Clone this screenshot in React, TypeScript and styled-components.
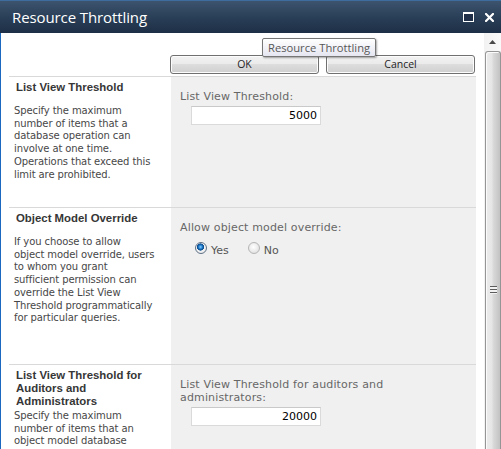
import styled, { createGlobalStyle } from "styled-components";

const GlobalStyle = createGlobalStyle`
  html, body {
    margin: 0;
    padding: 0;
    background: #ffffff;
  }
  body {
    font-family: "DejaVu Sans", Verdana, sans-serif;
  }
`;

const Frame = styled.div`
  position: relative;
  width: 501px;
  height: 449px;
  overflow: hidden;
  display: flex;
  flex-direction: column;
  background: #ffffff;
`;

const TitleBar = styled.div`
  flex: none;
  height: 33px;
  box-sizing: border-box;
  display: flex;
  align-items: center;
  padding: 0 7px 0 12px;
  border-top: 1px solid #3f6c9e;
  background: linear-gradient(#3d546e, #2a3f58 50%, #1d2f46);
`;

const TitleText = styled.div`
  font-family: "Open Sans", "Liberation Sans", sans-serif;
  font-size: 15px;
  color: #ffffff;
  letter-spacing: -0.1px;
`;

const TitleIcons = styled.div`
  margin-left: auto;
  display: flex;
  align-items: center;
  gap: 11px;
`;

const MaxIcon = styled.div`
  width: 11px;
  height: 10px;
  box-sizing: border-box;
  border: 1px solid #ffffff;
  border-top-width: 2px;
  background: #1f3048;
`;

const Body = styled.div`
  flex: 1;
  display: flex;
  min-height: 0;
  border-left: 1px solid #1a68bf;
`;

const Content = styled.div`
  flex: 1;
  padding: 0 8px;
  min-width: 0;
`;

const ButtonRow = styled.div`
  height: 43px;
  box-sizing: border-box;
  display: flex;
  justify-content: flex-end;
  align-items: flex-end;
  gap: 7px;
  padding: 0 1px 2px 0;
`;

const Button = styled.button<{ $w: number }>`
  width: ${(p) => p.$w}px;
  height: 19px;
  padding: 0;
  border: 1px solid #707070;
  border-radius: 3px;
  box-shadow: inset 0 0 0 1px #fcfcfc;
  background: linear-gradient(#f2f2f2, #ebebeb 45%, #dddddd 50%, #cfcfcf);
  font-family: "Open Sans", "Liberation Sans", sans-serif;
  font-size: 10.5px;
  color: #1e1e1e;
  line-height: 15px;
`;

const Section = styled.div<{ $h?: number }>`
  display: grid;
  grid-template-columns: 162px 1fr;
  border-top: 1px solid #d9d9d9;
  height: ${(p) => (p.$h ? `${p.$h}px` : "auto")};
  box-sizing: border-box;
`;

const InfoCell = styled.div`
  padding: 4px 0 0 0;
  background: #ffffff;
`;

const SectionTitle = styled.div`
  font-family: "Liberation Sans", Arial, sans-serif;
  font-weight: 700;
  font-size: 11.4px;
  line-height: 13px;
  color: #363636;
  padding-left: 7px;
  min-height: 22px;
  margin-bottom: 2px;
`;

const Description = styled.div`
  font-size: 10px;
  letter-spacing: -0.1px;
  line-height: 12.7px;
  color: #474747;
  padding-left: 5px;
  white-space: nowrap;
`;

const FieldCell = styled.div`
  background: #f0f0f0;
  padding: 13px 0 0 9px;
`;

const FieldLabel = styled.div`
  font-size: 11px;
  letter-spacing: 0.15px;
  line-height: 13px;
  color: #676767;
  white-space: nowrap;
`;

const NumberBox = styled.div`
  margin: 3px 0 0 11px;
  width: 130px;
  height: 19px;
  box-sizing: border-box;
  border: 1px solid #dadada;
  border-top-color: #c9c9c9;
  background: #ffffff;
  text-align: right;
  padding: 0 3px 0 0;
  font-size: 11px;
  line-height: 17px;
  color: #000000;
`;

const RadioRow = styled.div`
  display: flex;
  align-items: flex-start;
  margin: 8px 0 0 15px;
  gap: 19px;
`;

const RadioOption = styled.label`
  display: flex;
  align-items: flex-start;
  gap: 4px;
`;

const RadioDot = styled.span<{ $on?: boolean }>`
  width: 12px;
  height: 12px;
  box-sizing: border-box;
  border-radius: 50%;
  border: 1px solid ${(p) => (p.$on ? "#5f7186" : "#b5b5b5")};
  background: ${(p) =>
    p.$on
      ? "radial-gradient(circle at 45% 40%, #8fd0ff 0, #2a8ad8 1.6px, #0d4f92 3px, #1a5a9a 3.4px, #f4f4f4 3.8px, #e2e2e2 100%)"
      : "radial-gradient(circle at 45% 40%, #ffffff 0, #f0f0f0 40%, #d8d8d8 100%)"};
`;

const RadioText = styled.span`
  margin-top: 2px;
  font-size: 11px;
  line-height: 13px;
  color: #555555;
`;

const ScrollBar = styled.div`
  flex: none;
  width: 17px;
  display: flex;
  flex-direction: column;
  background: linear-gradient(to right, #f2f2f2, #fafafa);
`;

const ScrollArrow = styled.div`
  height: 18px;
  display: flex;
  justify-content: center;
  padding-top: 7px;
  box-sizing: border-box;
`;

const ScrollThumb = styled.div`
  flex: 1;
  margin-left: 1px;
  border: 1px solid #959595;
  border-bottom: none;
  border-radius: 3px 3px 0 0;
  box-shadow: inset 1px 1px 0 #fbfbfb;
  background: linear-gradient(
    to right,
    #ececec,
    #e6e6e6 40%,
    #d7d7d7 55%,
    #cccccc 80%,
    #c2c2c2
  );
  display: flex;
  justify-content: center;
`;

const Grip = styled.div`
  margin-top: 234px;
  width: 7px;
  height: 8px;
  background: repeating-linear-gradient(
    #5c5c5c 0,
    #5c5c5c 1px,
    #f2f2f2 1px,
    #f2f2f2 3px
  );
`;

const Tooltip = styled.div`
  position: absolute;
  left: 262px;
  top: 38px;
  height: 19px;
  box-sizing: border-box;
  padding: 0 5px;
  border: 1px solid #767676;
  border-radius: 2px;
  background: linear-gradient(#ffffff, #e5e6f0);
  box-shadow: 1px 1px 2px rgba(0, 0, 0, 0.35);
  font-family: "Open Sans", "Liberation Sans", sans-serif;
  font-size: 11.2px;
  line-height: 17px;
  color: #575757;
  white-space: nowrap;
`;

const Lines = ({ lines }: { lines: string[] }) => (
  <>
    {lines.map((l, i) => (
      <div key={i}>{l}</div>
    ))}
  </>
);

export default function App() {
  return (
    <>
      <GlobalStyle />
      <Frame>
        <TitleBar>
          <TitleText>Resource Throttling</TitleText>
          <TitleIcons>
            <MaxIcon />
            <svg width="9" height="9" viewBox="0 0 9 9">
              <path
                d="M1 1 L8 8 M8 1 L1 8"
                stroke="#ffffff"
                strokeWidth="2.2"
                strokeLinecap="square"
              />
            </svg>
          </TitleIcons>
        </TitleBar>
        <Body>
          <Content>
            <ButtonRow>
              <Button $w={149}>OK</Button>
              <Button $w={149}>Cancel</Button>
            </ButtonRow>

            <Section $h={131}>
              <InfoCell>
                <SectionTitle>List View Threshold</SectionTitle>
                <Description>
                  <Lines
                    lines={[
                      "Specify the maximum",
                      "number of items that a",
                      "database operation can",
                      "involve at one time.",
                      "Operations that exceed this",
                      "limit are prohibited.",
                    ]}
                  />
                </Description>
              </InfoCell>
              <FieldCell>
                <FieldLabel>List View Threshold:</FieldLabel>
                <NumberBox>5000</NumberBox>
              </FieldCell>
            </Section>

            <Section $h={157}>
              <InfoCell>
                <SectionTitle>Object Model Override</SectionTitle>
                <Description>
                  <Lines
                    lines={[
                      "If you choose to allow",
                      "object model override, users",
                      "to whom you grant",
                      "sufficient permission can",
                      "override the List View",
                      "Threshold programmatically",
                      "for particular queries.",
                    ]}
                  />
                </Description>
              </InfoCell>
              <FieldCell>
                <FieldLabel>Allow object model override:</FieldLabel>
                <RadioRow>
                  <RadioOption>
                    <RadioDot $on />
                    <RadioText>Yes</RadioText>
                  </RadioOption>
                  <RadioOption>
                    <RadioDot />
                    <RadioText>No</RadioText>
                  </RadioOption>
                </RadioRow>
              </FieldCell>
            </Section>

            <Section $h={120}>
              <InfoCell>
                <SectionTitle>
                  <Lines
                    lines={[
                      "List View Threshold for",
                      "Auditors and",
                      "Administrators",
                    ]}
                  />
                </SectionTitle>
                <Description>
                  <Lines
                    lines={[
                      "Specify the maximum",
                      "number of items that an",
                      "object model database",
                    ]}
                  />
                </Description>
              </InfoCell>
              <FieldCell>
                <FieldLabel>
                  <Lines
                    lines={[
                      "List View Threshold for auditors and",
                      "administrators:",
                    ]}
                  />
                </FieldLabel>
                <NumberBox>20000</NumberBox>
              </FieldCell>
            </Section>
          </Content>
          <ScrollBar>
            <ScrollArrow>
              <svg width="7" height="4" viewBox="0 0 7 4">
                <path d="M0 4 L3.5 0 L7 4 Z" fill="#4a4a4a" />
              </svg>
            </ScrollArrow>
            <ScrollThumb>
              <Grip />
            </ScrollThumb>
          </ScrollBar>
        </Body>
        <Tooltip>Resource Throttling</Tooltip>
      </Frame>
    </>
  );
}
